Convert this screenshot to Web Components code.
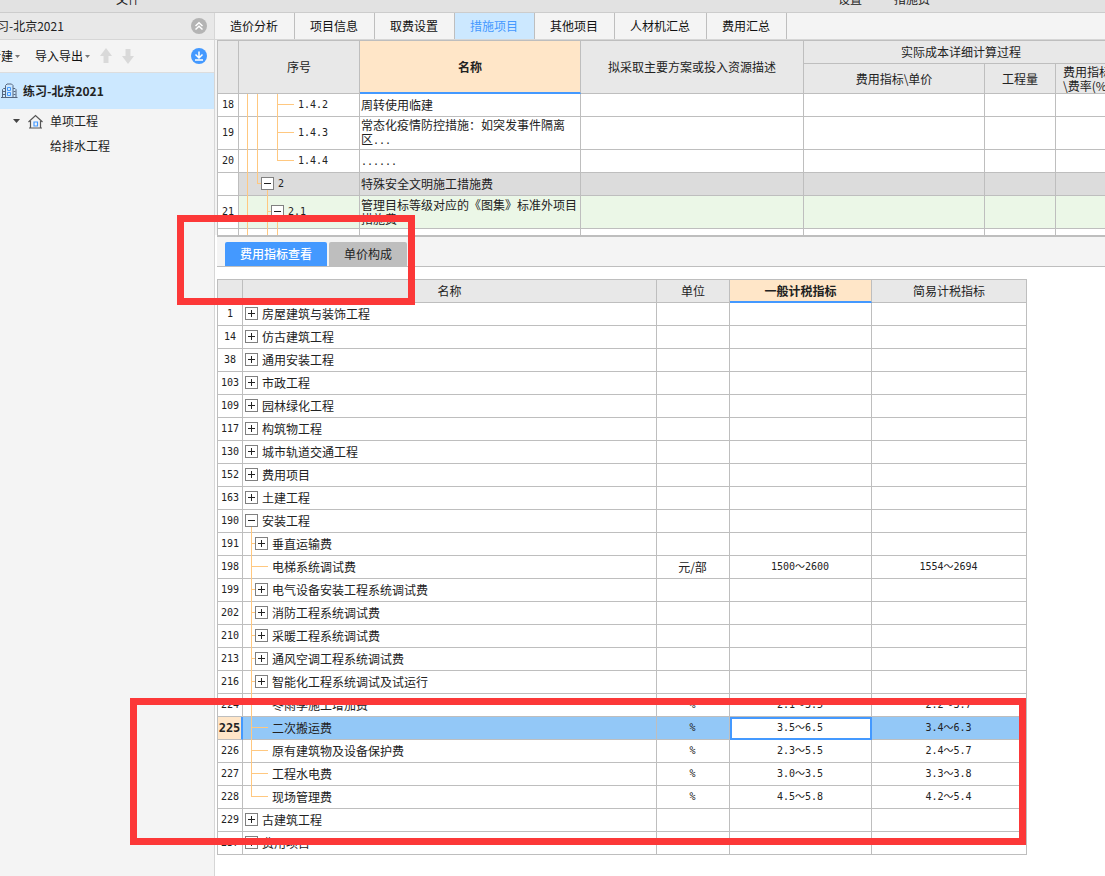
<!DOCTYPE html>
<html lang="zh-CN">
<head>
<meta charset="utf-8">
<title>措施项目</title>
<style>
  body { margin: 0; background: #fff; color: #222; font: 12px/14px "Noto Sans CJK SC", sans-serif; }
</style>
</head>
<body>
<cost-app></cost-app>

<template id="t-app">
  <style>
    :host { display: grid; position: relative; grid-template: auto 1fr / 215px minmax(0, 1fr); min-height: 100vh; overflow: hidden; }
    app-menu { grid-column: 1 / -1; }
    main { min-width: 0; display: flex; flex-direction: column; }
    .upper { height: 195px; overflow: hidden; padding-left: 2px; background: linear-gradient(90deg, #f4f4f4 2px, #fff 2px); }
    .split { margin-left: 2px; height: 2px; background: #bebebe; }
    .lower { margin-left: 2px; padding-top: 12px; }
    red-mark { position: absolute; }
    .m1 { left: 177px; top: 215px; width: 238px; height: 90px; }
    .m2 { left: 130px; top: 698px; width: 896px; height: 147px; }
  </style>
  <app-menu></app-menu>
  <project-tree></project-tree>
  <main>
    <tab-bar>
      <button>造价分析</button><button>项目信息</button><button>取费设置</button><button class="on">措施项目</button><button>其他项目</button><button>人材机汇总</button><button>费用汇总</button>
    </tab-bar>
    <div class="upper"><measure-grid></measure-grid></div>
    <div class="split"></div>
    <sub-tabs><button class="on">费用指标查看</button><button>单价构成</button></sub-tabs>
    <div class="lower"><index-grid></index-grid></div>
  </main>
  <red-mark class="m1"></red-mark>
  <red-mark class="m2"></red-mark>
</template>

<template id="t-menu">
  <style>
    :host { display: flex; align-items: flex-end; height: 12px; padding: 0 175px 0 116px; gap: 32px; overflow: hidden; background: #e2e2e2; border-bottom: 1px solid #ccc; }
    a { color: #222; text-decoration: none; line-height: 16px; margin-bottom: 5px; }
    .gap { flex: 1; }
  </style>
  <a href="#file">文件</a><span class="gap"></span><a href="#set">设置</a><a href="#fee">措施费</a>
</template>

<template id="t-tree">
  <style>
    :host { display: block; overflow: hidden; background: #f4f4f4; border-right: 1px solid #d6d6d6; }
    button { border: 0; padding: 0; background: none; font: inherit; color: inherit; white-space: nowrap; display: flex; align-items: center; gap: 2px; }
    svg { display: block; flex: none; }
    .head, .tools, .row { display: flex; align-items: center; white-space: nowrap; }
    .head { height: 26px; background: #e8e8e8; border-bottom: 1px solid #d6d6d6; padding-right: 7px; }
    .head span { margin-left: -15px; flex: 1; }
    .tools { height: 32px; border-bottom: 1px solid #ddd; color: #111; padding-right: 7px; gap: 10px; }
    .tools .new { margin-left: -11px; margin-right: 5px; }
    .tools .end { margin-left: auto; }
    .row { height: 25px; }
    .proj { height: 36px; background: #cce8ff; font-weight: bold; gap: 5px; padding-left: 1px; }
    .unit { padding-left: 12px; gap: 7px; height: 24px; }
    .leaf { padding-left: 50px; }
  </style>
  <div class="head"><span>练习-北京2021</span>
    <button aria-label="收起"><svg width="16" height="16" viewBox="0 0 16 16"><circle cx="8" cy="8" r="8" fill="#b4b4b4"/><path d="M4.500 8 8 4.800 11.500 8M4.500 11.500 8 8.300 11.500 11.500" fill="none" stroke="#fff" stroke-width="1.500"/></svg></button>
  </div>
  <div class="tools">
    <button class="new">新建<svg width="5" height="3"><path d="M0 0h5L2.500 3z" fill="#777"/></svg></button>
    <button>导入导出<svg width="5" height="3"><path d="M0 0h5L2.500 3z" fill="#777"/></svg></button>
    <button aria-label="上移"><svg width="12" height="16" viewBox="0 0 12 16"><path d="M6 0 12 8H8.500V15H3.500V8H0z" fill="#d9d9d9"/></svg></button>
    <button aria-label="下移"><svg width="12" height="16" viewBox="0 0 12 16"><path d="M6 16 12 8H8.500V1H3.500V8H0z" fill="#d9d9d9"/></svg></button>
    <button class="end" aria-label="下载"><svg width="16" height="16" viewBox="0 0 16 16"><circle cx="8" cy="8" r="8" fill="#4499ff"/><path d="M8 3.500V9.500M4.500 6.500 8 10 11.500 6.500M4 12H12" fill="none" stroke="#fff" stroke-width="1.500"/></svg></button>
  </div>
  <div class="row proj">
    <svg width="17" height="16" viewBox="0 0 17 16" fill="none" stroke="#56677f"><path d="M4.500 14.500V2.500L6 1H10.500L12 2.500V14.500M4.500 5.500H2.500L1.500 6.500V14.500M12 5.500H14L15 6.500V14.500M0 14.500H16.500M2 8.500H4M2 11.500H4M12.500 8.500H14.500M12.500 11.500H14.500"/><path d="M6.500 4.500H9.500V7.500H6.500zM6.500 9.500H9.500V12.500H6.500z" stroke="#4499ff"/></svg>
    <span>练习-北京2021</span>
  </div>
  <div class="row unit">
    <svg width="9" height="5"><path d="M1 0h7L4.500 4z" fill="#444"/></svg>
    <svg width="15" height="15" viewBox="0 0 15 15" fill="none" stroke="#555" stroke-width="1.200"><path d="M.5 8 7.500 1.500 14.500 8M2.500 7V13.500M12.500 7V13.500M1 14H14"/><path d="M6 8H9.500V12H6z" stroke="#4499ff"/></svg>
    <span>单项工程</span>
  </div>
  <div class="row leaf">给排水工程</div>
</template>

<template id="t-tabs">
  <style>
    :host { display: flex; height: 26px; background: #f4f4f4; border-bottom: 1px solid #d6d6d6; }
    ::slotted(button) { border: 0; border-right: 1px solid #bebebe; padding: 0 16px 0 15px; background: none; font: inherit; color: #111; white-space: nowrap; }
    ::slotted(button.on) { background: #cce8ff; color: #4499ff; }
  </style>
  <slot></slot>
</template>

<template id="t-sub">
  <style>
    :host { display: flex; align-items: flex-end; gap: 2px; height: 29px; margin-left: 2px; padding-left: 8px; background: #f4f4f4; border-bottom: 1px solid #bebebe; }
    ::slotted(button) { border: 0; border-radius: 2px 2px 0 0; height: 24px; padding: 0 15px; background: #bebebe; font: inherit; color: #222; }
    ::slotted(button.on) { background: #4499ff; color: #fff; font-weight: 500; }
  </style>
  <slot></slot>
</template>

<template id="t-mark">
  <style>:host { display: block; box-sizing: border-box; border: 7px solid #fc3838; pointer-events: none; }</style>
</template>

<template id="t-node">
  <style>
    :host { display: flex; align-items: center; box-sizing: border-box; padding: 0 0 1px 2px; height: var(--row, 22px); white-space: nowrap; --o: #ffc880; }
    i, .slot { flex: none; align-self: stretch; position: relative; margin-bottom: -2px; }
    i { width: 10px; }
    i::before, i::after, .slot::before { position: absolute; background: var(--o); }
    .line::before, .tee::before, .corner::before { content: ""; left: 6px; top: 0; bottom: 0; width: 1px; }
    .corner::before { bottom: auto; height: var(--mid, 11px); }
    .tee::after, .corner::after { content: ""; left: 6px; top: calc(var(--mid, 11px) - 1px); width: 4px; height: 1px; }
    .slot { width: 13px; margin-right: 4px; }
    .leaf::before { content: ""; left: 0; top: calc(var(--mid, 11px) - 1px); width: 13px; height: 1px; }
    .minus::before { content: ""; left: 6px; top: var(--mid, 11px); bottom: 0; width: 1px; }
    button { display: block; position: relative; margin-top: calc(var(--mid, 11px) - 7px); width: 13px; height: 13px; padding: 0; border: 1px solid #808080; background-color: #fff; background-repeat: no-repeat; background-position: 50%;
      background-image: linear-gradient(#222, #222), linear-gradient(#222, #222); background-size: 7px 1px, 1px 7px; }
    .minus button { background-size: 7px 1px, 0 0; }
  </style>
</template>

<template id="t-grid">
  <style>
    :host { display: block; }
    table { table-layout: fixed; border-collapse: separate; border-spacing: 0; border: 0 solid #bebebe; border-width: 1px 0 0 1px; }
    th, td { box-sizing: border-box; padding: 0; height: 23px; border: 0 solid #bebebe; border-width: 0 1px 1px 0; font-weight: normal; text-align: center; }
    thead th { background: #e8e8e8; }
    thead th.on { background: #ffe6c8; font-weight: bold; border-bottom: 2px solid #4499ff; }
    .num, tbody th { font-family: "DejaVu Sans Mono", "Noto Sans CJK SC", monospace; font-size: 10px; }
    tbody td { padding-right: 1px; }
    .left { text-align: left; }
    .name { text-align: left; padding: 0 0 1px 1px; }
    .tall { --row: 32px; --mid: 16px; }
    .tall > * { height: 33px; }
    .group > td { background: #dcdcdc; }
    .green > td { background: #ebf7e7; }
    .sel > td { background: #93c8f7; }
    .sel > th { background: #ffe6c8; font-weight: bold; font-size: 12px; border-right: 2px solid #4499ff; }
    .sel > td.focus { background: #fff; outline: 2px solid #4499ff; outline-offset: -2px; }
    thead .h30 { height: 30px; }
  </style>
  <table></table>
</template>

<script>
  const base = id => class extends HTMLElement {
    connectedCallback() {
      if (this.shadowRoot) return;
      this.attachShadow({ mode: "open" }).append(document.getElementById(id).content.cloneNode(true));
      this.render && this.render();
    }
  };
  const cols = list => "<colgroup>" + list.map(w => `<col style="width:${w}px">`).join("") + "</colgroup>";
  const node = (guides, kind, text, num) =>
    `<td class="left${num ? " num" : ""}"><tree-node guides="${guides}" kind="${kind}">${text}</tree-node></td>`;

  // One tree cell: guide columns, then a toggle or a leaf stub, then the text.
  customElements.define("tree-node", class extends base("t-node") {
    render() {
      const kind = this.getAttribute("kind");
      const guides = (this.getAttribute("guides") || "").split(" ").filter(Boolean);
      const toggle = kind === "plus" || kind === "minus"
        ? `<button aria-label="${kind === "plus" ? "展开" : "折叠"}"></button>` : "";
      const part = document.createElement("template");
      part.innerHTML = guides.map(g => `<i class="${g}"></i>`).join("") +
        (kind === "none" ? "" : `<span class="slot ${kind}">${toggle}</span>`) + "<slot></slot>";
      this.shadowRoot.append(part.content);
    }
  });

  // [number, guides, kind, code, name, row class]
  const measures = [
    ["18", "line line blank tee", "leaf", "1.4.2", "周转使用临建", ""],
    ["19", "line line blank tee", "leaf", "1.4.3", "常态化疫情防控措施：如突发事件隔离区<span class='num'>...</span>", "tall"],
    ["20", "line line blank corner", "leaf", "1.4.4", "<span class='num'>......</span>", ""],
    ["", "line corner", "minus", "2", "特殊安全文明施工措施费", "group"],
    ["21", "line blank tee", "minus", "2.1", "管理目标等级对应的《图集》标准外项目措施费", "tall green"],
    ["", "line blank line line", "none", "", "", ""]
  ];
  customElements.define("measure-grid", class extends base("t-grid") {
    render() {
      const table = this.shadowRoot.querySelector("table");
      table.style.width = "882px";
      table.innerHTML = cols([21, 121, 221, 223, 181, 71, 63]) +
        `<thead><tr><th rowspan="2"></th><th rowspan="2">序号</th><th rowspan="2" class="on">名称</th>
          <th rowspan="2">拟采取主要方案或投入资源描述</th><th colspan="3">实际成本详细计算过程</th></tr>
          <tr><th class="h30">费用指标\\单价</th><th class="h30">工程量</th><th class="h30">费用指标<br>\\费率(%)</th></tr></thead><tbody>` +
        measures.map(([n, g, k, code, name, cls]) =>
          `<tr class="${cls}"><th>${n}</th>${node(g, k, code, true)}<td class="name">${name}</td><td></td><td></td><td></td><td></td></tr>`).join("") +
        "</tbody>";
    }
  });

  // [number, guides, kind, name, unit, general tax index, simple tax index]
  const indexes = [
    ["1", "", "plus", "房屋建筑与装饰工程"],
    ["14", "", "plus", "仿古建筑工程"],
    ["38", "", "plus", "通用安装工程"],
    ["103", "", "plus", "市政工程"],
    ["109", "", "plus", "园林绿化工程"],
    ["117", "", "plus", "构筑物工程"],
    ["130", "", "plus", "城市轨道交通工程"],
    ["152", "", "plus", "费用项目"],
    ["163", "", "plus", "土建工程"],
    ["190", "", "minus", "安装工程"],
    ["191", "tee", "plus", "垂直运输费"],
    ["198", "tee", "leaf", "电梯系统调试费", "元/部", "1500～2600", "1554～2694"],
    ["199", "tee", "plus", "电气设备安装工程系统调试费"],
    ["202", "tee", "plus", "消防工程系统调试费"],
    ["210", "tee", "plus", "采暖工程系统调试费"],
    ["213", "tee", "plus", "通风空调工程系统调试费"],
    ["216", "tee", "plus", "智能化工程系统调试及试运行"],
    ["224", "tee", "leaf", "冬雨季施工增加费", "%", "2.1～3.5", "2.2～3.7"],
    ["225", "tee", "leaf", "二次搬运费", "%", "3.5～6.5", "3.4～6.3"],
    ["226", "tee", "leaf", "原有建筑物及设备保护费", "%", "2.3～5.5", "2.4～5.7"],
    ["227", "tee", "leaf", "工程水电费", "%", "3.0～3.5", "3.3～3.8"],
    ["228", "corner", "leaf", "现场管理费", "%", "4.5～5.8", "4.2～5.4"],
    ["229", "", "plus", "古建筑工程"],
    ["237", "", "plus", "费用项目"]
  ];
  customElements.define("index-grid", class extends base("t-grid") {
    render() {
      const table = this.shadowRoot.querySelector("table");
      table.style.width = "810px";
      table.innerHTML = cols([25, 414, 73, 142, 155]) +
        `<thead><tr><th></th><th>名称</th><th>单位</th><th class="on">一般计税指标</th><th>简易计税指标</th></tr></thead><tbody>` +
        indexes.map(([n, g, k, name, unit = "", a = "", b = ""]) => {
          const sel = n === "225";
          return `<tr class="${sel ? "sel" : ""}"><th>${n}</th>${node(g, k, name)}<td class="${unit === "%" ? "num" : ""}">${unit}</td><td class="num${sel ? " focus" : ""}">${a}</td><td class="num">${b}</td></tr>`;
        }).join("") + "</tbody>";
    }
  });

  customElements.define("app-menu", base("t-menu"));
  customElements.define("project-tree", base("t-tree"));
  customElements.define("tab-bar", base("t-tabs"));
  customElements.define("sub-tabs", base("t-sub"));
  customElements.define("red-mark", base("t-mark"));
  customElements.define("cost-app", base("t-app"));
</script>
</body>
</html>
